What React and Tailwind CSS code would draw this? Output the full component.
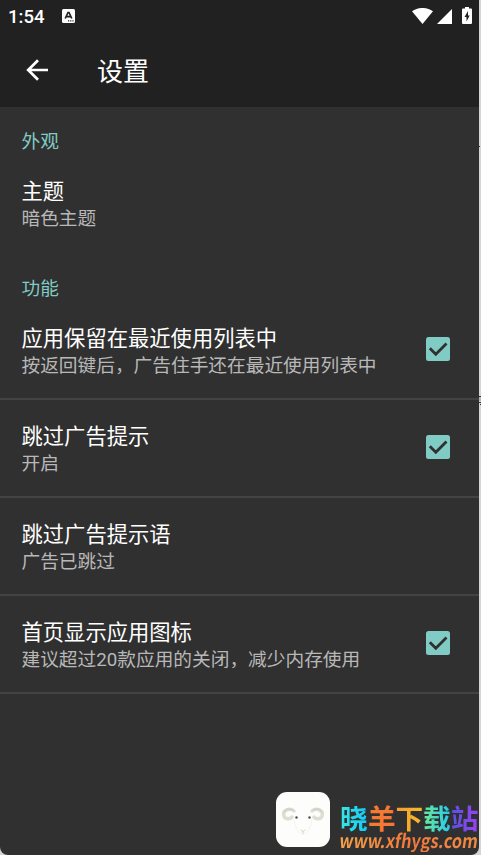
import React from "react";

const sections = [
  {
    title: "外观",
    items: [{ title: "主题", summary: "暗色主题" }],
  },
  {
    title: "功能",
    items: [
      {
        title: "应用保留在最近使用列表中",
        summary: "按返回键后，广告住手还在最近使用列表中",
        checked: true,
        divider: true,
      },
      { title: "跳过广告提示", summary: "开启", checked: true, divider: true },
      { title: "跳过广告提示语", summary: "广告已跳过", divider: true },
      {
        title: "首页显示应用图标",
        summary: "建议超过20款应用的关闭，减少内存使用",
        checked: true,
        divider: true,
      },
    ],
  },
];

const StatusBar = () => (
  <div className="flex h-8 items-center justify-between pl-2 pr-[7px] text-white">
    <div className="flex items-center">
      <span className="w-[54px] pt-0.5 text-[18.5px] font-medium leading-8">
        1:54
      </span>
      <svg className="h-[14px] w-[13px]" viewBox="0 0 13 14">
        <rect width="13" height="14" rx="1.5" fill="#fff" />
        <path
          d="M3.2 9.5 6 3.5h1l2.8 6M4.4 7.6h4.2"
          fill="none"
          stroke="#212121"
          strokeWidth="1.7"
        />
        <path d="M6 11.3h1.2v1.2H6zM8.2 11.3h1.2v1.2H8.2zM10.4 11.3h1.2v1.2h-1.2z" fill="#212121" />
      </svg>
    </div>
    <div className="flex items-center">
      <svg className="mr-1 h-4 w-[21px]" viewBox="0 0 21 16" fill="#fff">
        <path d="M0 3.2C6-1.1 15-1.1 21 3.2L10.5 16z" />
      </svg>
      <svg className="mr-[10px] h-[15px] w-[15px]" viewBox="0 0 15 15" fill="#fff">
        <path d="M15 0v15H0z" />
      </svg>
      <svg className="mb-px h-[17px] w-[10px]" viewBox="0 0 10 17">
        <path
          d="M3 0h4v1.5h2a1 1 0 0 1 1 1V16a1 1 0 0 1-1 1H1a1 1 0 0 1-1-1V2.5a1 1 0 0 1 1-1h2z"
          fill="#fff"
        />
        <path d="M6 4 2.5 10h2v4.5L7.7 8.5H6z" fill="#212121" />
      </svg>
    </div>
  </div>
);

const AppBar = () => (
  <div className="flex h-[75px] items-center pl-[26px] text-white">
    <svg className="h-[22px] w-[22px]" viewBox="0 0 22 22">
      <path
        d="M22 11H2.2M12 1.2 2.2 11l9.8 9.8"
        fill="none"
        stroke="#fff"
        strokeWidth="2.7"
      />
    </svg>
    <h1 className="ml-[49px] pt-1 text-[26px] leading-8">设置</h1>
  </div>
);

const Checkbox = () => (
  <svg className="mb-0.5 h-6 w-6 shrink-0" viewBox="0 0 24 24">
    <rect width="24" height="24" rx="2.5" fill="#80cbc4" />
    <path
      d="m3.8 11.2 6 6L20.5 6.4"
      fill="none"
      stroke="#303030"
      strokeWidth="2.8"
    />
  </svg>
);

const PreferenceRow = ({ title, summary, checked, divider }) => (
  <div
    className={
      divider
        ? "flex h-[98px] items-center justify-between border-b-2 border-[#434343] pl-[21.5px] pr-[29px]"
        : "flex h-[98px] items-center justify-between border-b-2 border-transparent pl-[21.5px] pr-[29px]"
    }
  >
    <div className="pt-1">
      <div className="text-[21.3px] leading-[27px] text-white">{title}</div>
      <div className="text-[18.7px] leading-[28px] text-[#b8b8b8]">
        {summary}
      </div>
    </div>
    {checked && <Checkbox />}
  </div>
);

const SheepLogo = () => (
  <svg className="h-[55px] w-[54px]" viewBox="0 0 54 55">
    <rect width="54" height="55" rx="11" fill="#fdfdfb" />
    <g fill="none" strokeLinecap="round">
      <path
        d="M18 19c-5-4-12 0-10 5 1 4 7 3 8 1M36 19c5-4 12 0 10 5-1 4-7 3-8 1"
        stroke="#deded4"
        strokeWidth="3.5"
      />
      <path
        d="M17 18c-4-2-8-1-9 2M37 18c4-2 8-1 9 2"
        stroke="#c9c9bd"
        strokeWidth="1"
      />
      <path d="M25 38l2 1.5 2-1.5M27 39.5V42" stroke="#d4d4cc" strokeWidth="1" />
      <path d="M18 28c1 6 3 11 7 14M36 28c-1 6-3 11-7 14" stroke="#f3f3ef" strokeWidth="1" />
    </g>
    <circle cx="20.5" cy="25.5" r="1.2" fill="#4c4c48" />
    <circle cx="33.5" cy="25.5" r="1.2" fill="#4c4c48" />
  </svg>
);

const Watermark = () => (
  <div className="absolute left-[276px] top-[792px] flex items-start">
    <SheepLogo />
    <div className="ml-[10px] whitespace-nowrap pt-[13px]">
      <div className="flex text-[27.7px] font-bold leading-[30px]">
        <span className="bg-linear-to-r from-[#35e8e5] to-[#15c8f5] bg-clip-text text-transparent">
          晓
        </span>
        <span className="text-[#f47a34]">羊</span>
        <span className="bg-linear-to-r from-[#f49b2f] to-[#f5bd2a] bg-clip-text text-transparent">
          下
        </span>
        <span className="bg-linear-to-r from-[#67e98f] to-[#20c8f0] bg-clip-text text-transparent">
          载
        </span>
        <span className="bg-linear-to-r from-[#5451e8] to-[#9b40f4] bg-clip-text text-transparent">
          站
        </span>
      </div>
      <div className="-ml-0.5 -mt-[7px] h-[24px] w-[137px]">
        <span className="inline-block origin-bottom-left scale-x-[0.86] -skew-x-10 bg-linear-to-r from-[#f2a24b] via-[#f2793b] to-[#f08a43] bg-clip-text font-['Noto_Sans_CJK_SC',sans-serif] text-[19px] font-bold leading-[24px] text-transparent">
          www.xfhygs.com
        </span>
      </div>
    </div>
  </div>
);

// Sliver of the window behind the right edge of the screen
const EdgeStrip = () => (
  <svg className="h-[855px] w-[2px]" viewBox="0 0 2 855">
    <path d="M0 146h1v1H0zM0 396h2v1H0zM0 402h2v1H0zM1 404h1v1H1z" fill="#333" />
    <path d="M0 397h2v4H0z" fill="#a9bcc8" />
  </svg>
);

const App = () => (
  <div className="flex h-[855px] w-[481px] overflow-hidden bg-[#d5d5d5] font-['Roboto','Noto_Sans_CJK_SC',sans-serif]">
    <div className="relative h-[855px] w-[479px] rounded-b-[8px] bg-[#303030]">
      <header className="bg-[#212121]">
        <StatusBar />
        <AppBar />
      </header>
      <main>
        {sections.map((section) => (
          <section key={section.title}>
            <h2 className="h-[48.5px] pl-[21.5px] pt-[22px] text-[18.7px] leading-[27px] text-[#80cbc4]">
              {section.title}
            </h2>
            {section.items.map((item) => (
              <PreferenceRow key={item.title} {...item} />
            ))}
          </section>
        ))}
      </main>
      <Watermark />
    </div>
    <EdgeStrip />
  </div>
);

export default App;
